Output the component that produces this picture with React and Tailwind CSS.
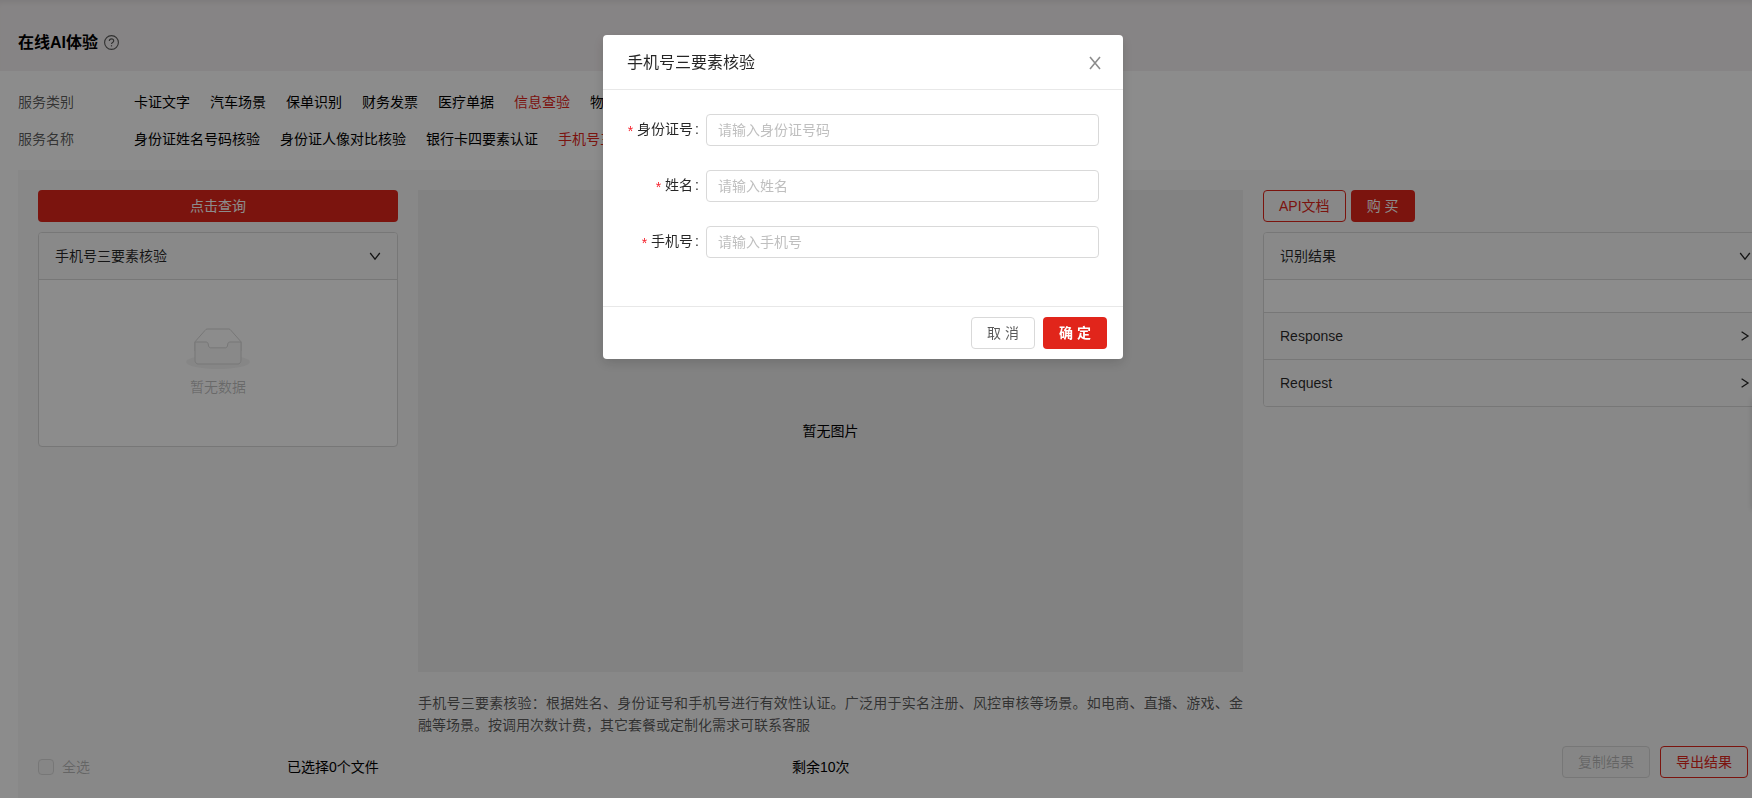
import React, { useState } from 'react';
import clsx from 'clsx';

const categories = ['卡证文字', '汽车场景', '保单识别', '财务发票', '医疗单据', '信息查验', '物流单据'];
const services = ['身份证姓名号码核验', '身份证人像对比核验', '银行卡四要素认证', '手机号三要素核验'];

const fields = [
  { id: 'idCard', label: '身份证号', placeholder: '请输入身份证号码' },
  { id: 'name', label: '姓名', placeholder: '请输入姓名' },
  { id: 'phone', label: '手机号', placeholder: '请输入手机号' },
];

function Chevron({ open }) {
  return (
    <svg width="12" height="12" viewBox="0 0 12 12" fill="none" stroke="currentColor" strokeWidth="1.3" className="shrink-0">
      <path d={open ? 'M1.2 3 6 9.2 10.8 3' : 'M2.6 1.8 9 6l-6.4 4.2'} />
    </svg>
  );
}

function EmptyIcon() {
  return (
    <svg width="64" height="41" viewBox="0 0 64 41">
      <g transform="translate(0 1)" fill="none" fillRule="evenodd">
        <ellipse fill="#f5f5f5" cx="32" cy="33" rx="32" ry="7" />
        <g fillRule="nonzero" stroke="#d9d9d9">
          <path d="M55 12.76L44.854 1.258C44.367.474 43.656 0 42.907 0H21.093c-.749 0-1.46.474-1.947 1.257L9 12.761V22h46v-9.24z" />
          <path
            d="M41.613 15.931c0-1.605.994-2.93 2.227-2.931H55v18.137C55 33.26 53.68 35 52.05 35h-40.1C10.32 35 9 33.259 9 31.137V13h11.16c1.233 0 2.227 1.323 2.227 2.928v.022c0 1.605 1.005 2.901 2.237 2.901h14.752c1.232 0 2.237-1.308 2.237-2.913v-.007z"
            fill="#fafafa"
          />
        </g>
      </g>
    </svg>
  );
}

function FilterRow({ label, items, active }) {
  return (
    <div className="flex h-[37px] items-center">
      <span className="w-[116px] shrink-0 text-black/65">{label}</span>
      <div className="flex gap-5 whitespace-nowrap">
        {items.map((item) => (
          <a key={item} href="#" className={item === active ? 'text-[#e1251b]' : 'text-black'}>
            {item}
          </a>
        ))}
      </div>
    </div>
  );
}

function PanelHeader({ title, open, className }) {
  return (
    <button className={clsx('flex w-full items-center justify-between bg-[#fafafa] px-4 text-black/85', className)}>
      {title}
      <Chevron open={open} />
    </button>
  );
}

function QueryModal({ onClose }) {
  return (
    <div className="fixed inset-0 flex items-start justify-center bg-black/45 pt-[35px] pr-[26px]">
      <div role="dialog" aria-label="手机号三要素核验" className="w-[520px] rounded bg-white shadow-[0_4px_12px_rgba(0,0,0,0.15)]">
        <div className="flex h-[55px] items-center justify-between border-b border-[#e8e8e8] px-6 pt-0.5">
          <h2 className="text-base text-black/85">手机号三要素核验</h2>
          <button onClick={onClose} aria-label="关闭" className="-mr-1 text-black/45">
            <svg width="16" height="16" viewBox="0 0 16 16" fill="none" stroke="currentColor" strokeWidth="1.6">
              <path d="M3 2 13 14M13 2 3 14" />
            </svg>
          </button>
        </div>
        <form className="flex flex-col gap-6 px-6 pt-6 pb-12">
          {fields.map((field) => (
            <div key={field.id} className="flex items-center">
              <label htmlFor={field.id} className="flex w-[79px] shrink-0 justify-end pr-[7px] whitespace-nowrap text-black/85">
                <span className="mr-1 pt-0.5 text-[#f5222d]">*</span>
                {field.label}
                <span className="ml-0.5">:</span>
              </label>
              <input
                id={field.id}
                type="text"
                placeholder={field.placeholder}
                className="h-8 min-w-0 flex-1 rounded border border-[#d9d9d9] px-[11px] placeholder:text-[#bfbfbf]"
              />
            </div>
          ))}
        </form>
        <div className="flex justify-end gap-2 border-t border-[#e8e8e8] px-4 py-2.5">
          <button onClick={onClose} className="h-8 w-16 rounded border border-[#d9d9d9] text-black/65">取 消</button>
          <button className="h-8 w-16 rounded bg-[#e1251b] font-bold text-white">确 定</button>
        </div>
      </div>
    </div>
  );
}

export default function App() {
  const [isModalOpen, setIsModalOpen] = useState(true);

  return (
    <div className="flex min-h-screen flex-col overflow-hidden bg-white font-['Liberation_Sans','Noto_Sans_CJK_SC',sans-serif] text-sm text-black">
      <header className="flex h-[71px] items-center gap-1.5 bg-[#f5f1f2] px-[18px] pt-3.5 shadow-[inset_0_6px_6px_-4px_rgba(0,0,0,0.08)]">
        <h1 className="text-base font-bold">在线AI体验</h1>
        <svg width="15" height="15" viewBox="0 0 15 15" fill="none" stroke="#595959">
          <circle cx="7.5" cy="7.5" r="6.9" strokeWidth="1.1" />
          <path d="M5.3 6c0-1.3 1-2.1 2.2-2.1s2.2.8 2.2 2c0 1.6-2.2 1.5-2.2 3.2" strokeWidth="1.1" />
          <path d="M7.5 10.2v1.2" strokeWidth="1.2" />
        </svg>
      </header>

      <section className="px-[18px] pt-3 pb-[13px]">
        <FilterRow label="服务类别" items={categories} active="信息查验" />
        <FilterRow label="服务名称" items={services} active="手机号三要素核验" />
      </section>

      <main className="-mr-9 ml-[18px] flex flex-1 flex-col bg-[#f7f7f7] px-5 pt-5">
        <div className="flex gap-5">
          <aside className="flex w-[360px] shrink-0 flex-col gap-2.5">
            <button onClick={() => setIsModalOpen(true)} className="h-8 rounded bg-[#e1251b] text-white">
              点击查询
            </button>
            <div className="overflow-hidden rounded border border-[#d9d9d9] bg-white">
              <PanelHeader title="手机号三要素核验" open className="h-[46px]" />
              <div className="flex h-[167px] flex-col items-center gap-2 border-t border-[#d9d9d9] pt-12 text-black/25">
                <EmptyIcon />
                <p>暂无数据</p>
              </div>
            </div>
          </aside>

          <div className="w-[825px] shrink-0">
            <div className="flex h-[482px] items-center justify-center bg-[#ededed]">暂无图片</div>
            <p className="mt-5 text-justify leading-[22px] text-black/65">
              手机号三要素核验：根据姓名、身份证号和手机号进行有效性认证。广泛用于实名注册、风控审核等场景。如电商、直播、游戏、金融等场景。按调用次数计费，其它套餐或定制化需求可联系客服
            </p>
          </div>

          <aside className="flex min-w-0 flex-1 flex-col gap-2.5">
            <div className="flex gap-[5px]">
              <button className="h-8 rounded border border-[#e1251b] px-[15px] text-[#e1251b]">API文档</button>
              <button className="h-8 w-16 rounded bg-[#e1251b] text-white">购 买</button>
            </div>
            <div className="overflow-hidden rounded border border-[#d9d9d9] bg-white">
              <PanelHeader title="识别结果" open className="h-[46px]" />
              <div className="h-[33px] border-t border-[#d9d9d9]" />
              <PanelHeader title="Response" className="h-[47px] border-t border-[#d9d9d9]" />
              <PanelHeader title="Request" className="h-[47px] border-t border-[#d9d9d9]" />
            </div>
          </aside>
        </div>

        <footer className="mt-2.5 flex items-start pr-5">
          <div className="flex flex-1 items-center pt-[11px]">
            <label className="flex w-[249px] items-center gap-2 text-black/25">
              <input type="checkbox" disabled className="size-4 appearance-none rounded-sm border border-[#d9d9d9] bg-[#f5f5f5]" />
              全选
            </label>
            <span className="w-[505px]">已选择0个文件</span>
            <span>剩余10次</span>
          </div>
          <div className="flex gap-2.5">
            <button disabled className="h-8 rounded border border-[#d9d9d9] bg-[#f5f5f5] px-[15px] text-black/25">复制结果</button>
            <button className="h-8 rounded border border-[#e1251b] px-[15px] text-[#e1251b]">导出结果</button>
          </div>
        </footer>
      </main>

      {/* collapsed side toolbar, only its shadow reaches into the page */}
      <div className="fixed top-[398px] left-full h-28 w-10 bg-white shadow-[0_0_6px_rgba(0,0,0,0.15)]" />

      {isModalOpen && <QueryModal onClose={() => setIsModalOpen(false)} />}
    </div>
  );
}
